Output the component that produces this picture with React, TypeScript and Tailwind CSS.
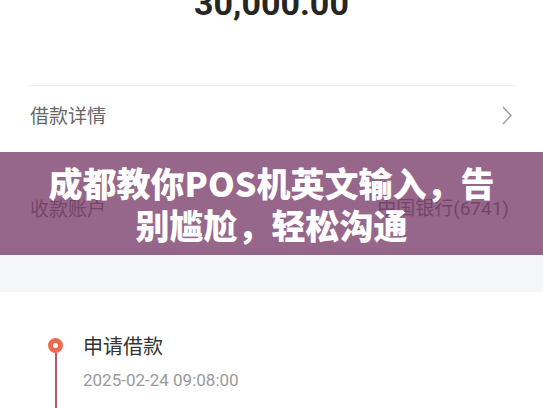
import React from 'react';

const cjk = { fontFamily: '"Noto Sans CJK SC", "Noto Sans", sans-serif' };
const num = { fontFamily: 'Roboto, "Noto Sans CJK SC", sans-serif' };

const App: React.FC = () => {
  return (
    <div className="relative w-[543px] h-[408px] overflow-hidden bg-[#f5f6f8]" style={cjk}>
      {/* Amount card */}
      <div className="flow-root bg-white h-[250px]">
        <div className="text-center text-[34px] font-bold leading-none mt-[-14px] text-[#262626]" style={num}>
          30,000.00
        </div>
        <div className="mx-[28px] mt-[65px] h-px bg-[#f0f0f0]" />
        <div className="flex items-center justify-between h-[58px] pl-[30px] pr-[31px]">
          <span className="text-[19px] text-[#666]">借款详情</span>
          <svg width="10" height="19" viewBox="0 0 10 19" fill="none">
            <path d="M1 1 L9 9.5 L1 18" stroke="#a0a0a0" strokeWidth="1.6" />
          </svg>
        </div>
        <div className="flex items-center justify-between h-[58px] mt-[35px] pl-[30px] pr-[34px]">
          <span className="text-[19px] text-[#666]">收款账户</span>
          <span className="text-[19px] text-[#666]">中国银行<span style={num}>(6741)</span></span>
        </div>
      </div>

      {/* Timeline card */}
      <div className="bg-white mt-[42px] h-[200px] pt-[46px] pl-[48px]">
        <div className="flex">
          <div className="flex flex-col items-center w-[15px]">
            <div className="w-[15px] h-[15px] rounded-full border-[5px] border-[#ef6a4c] bg-white" />
            <div className="w-[2px] h-[80px] bg-[#b8566a]" />
          </div>
          <div className="ml-[20px] -mt-[4px]">
            <div className="text-[20px] leading-[24px] text-[#333]">申请借款</div>
            <div className="text-[17px] leading-[20px] mt-[12px] text-[#9a9a9a]" style={num}>
              2025-02-24 09:08:00
            </div>
          </div>
        </div>
      </div>

      {/* Title overlay */}
      <div className="absolute left-0 right-0 top-[152px] h-[103px] bg-[rgba(120,60,105,0.78)] flex items-center justify-center">
        <h1 className="text-center text-white text-[34px] leading-[42px] font-black w-[450px]" style={cjk}>
          成都教你POS机英文输入，告别尴尬，轻松沟通
        </h1>
      </div>
    </div>
  );
};

export default App;
